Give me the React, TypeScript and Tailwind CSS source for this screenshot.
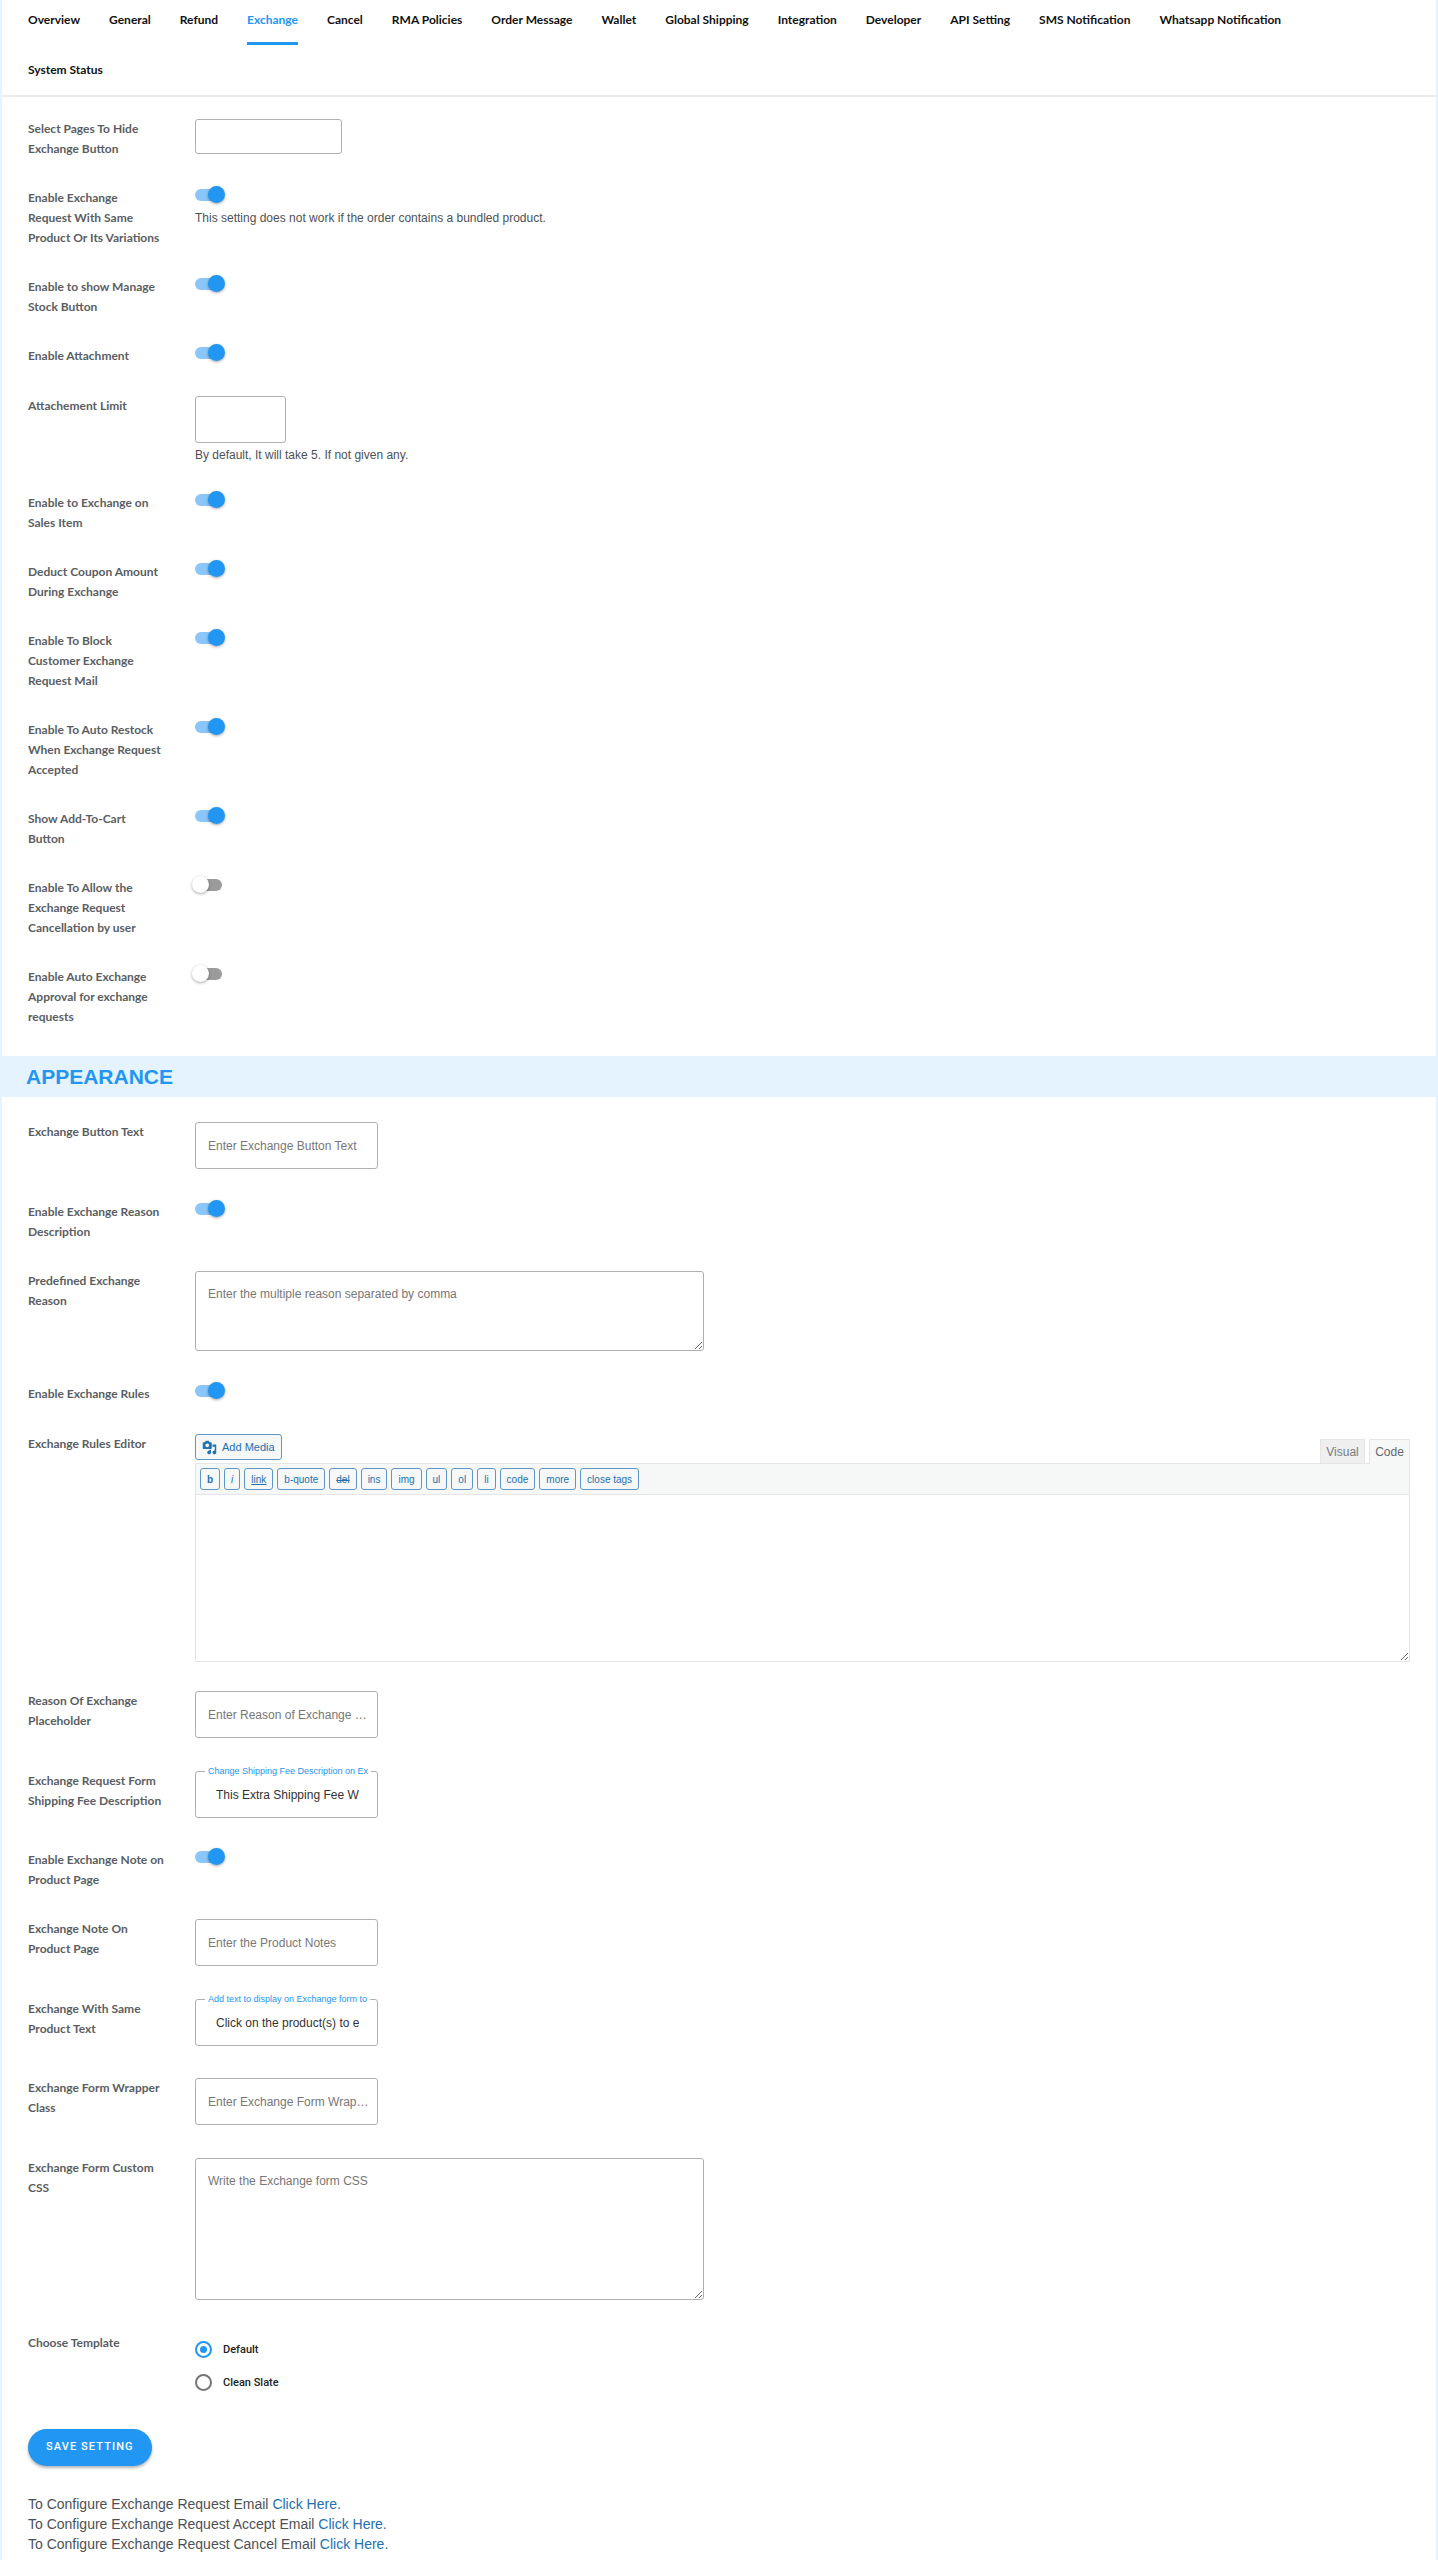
import type { ReactNode } from "react";

const tabs = [
  "Overview", "General", "Refund", "Exchange", "Cancel", "RMA Policies", "Order Message", "Wallet",
  "Global Shipping", "Integration", "Developer", "API Setting", "SMS Notification", "Whatsapp Notification",
  "System Status",
];

const quicktags = [
  { label: "b", style: "font-bold" },
  { label: "i", style: "italic" },
  { label: "link", style: "underline" },
  { label: "b-quote", style: "" },
  { label: "del", style: "line-through" },
  { label: "ins", style: "" },
  { label: "img", style: "" },
  { label: "ul", style: "" },
  { label: "ol", style: "" },
  { label: "li", style: "" },
  { label: "code", style: "" },
  { label: "more", style: "" },
  { label: "close tags", style: "" },
];

const mailLinks = ["Exchange Request Email", "Exchange Request Accept Email", "Exchange Request Cancel Email"];

function Row({ id, label, children }: { id?: string; label: string; children: ReactNode }) {
  return (
    <div className="flex min-h-[50px] px-[26px] pt-[15px] pb-[14px]">
      <label htmlFor={id} className="w-[167px] shrink-0 whitespace-pre-line font-[Lato,sans-serif] text-xs leading-5 font-bold text-[#5a5e63]">
        {label}
      </label>
      <div className="min-w-0 flex-1">{children}</div>
    </div>
  );
}

function Toggle({ id, label, on = true, hint }: { id: string; label: string; on?: boolean; hint?: string }) {
  return (
    <Row id={id} label={label}>
      <span className="relative mt-px block h-3 w-[27px]">
        <input id={id} type="checkbox" role="switch" defaultChecked={on} className="peer block h-3 w-[27px] cursor-pointer appearance-none rounded-full bg-[#9b9b9b] checked:bg-[#8ac6f9]" />
        <span className="pointer-events-none absolute -top-[3px] -left-[3px] size-[17px] rounded-full bg-white shadow-[0_1px_3px_rgba(0,0,0,0.35)] peer-checked:left-[13px] peer-checked:bg-[#2196f3]" />
      </span>
      {hint && <p className="mt-2 text-xs leading-[18px] text-[#4d5156]">{hint}</p>}
    </Row>
  );
}

function TextRow({ id, label, placeholder }: { id: string; label: string; placeholder: string }) {
  return (
    <Row id={id} label={label}>
      <input id={id} type="text" placeholder={placeholder} className="mb-1 block h-[47px] w-[183px] rounded-[3px] border border-[#b0b0b0] pr-2 pl-3 text-xs text-ellipsis text-[#333] outline-none placeholder:text-[#777]" />
    </Row>
  );
}

// outlined field whose caption sits in a notch of the top border
function FloatingRow({ id, label, caption, value }: { id: string; label: string; caption: string; value: string }) {
  return (
    <Row id={id} label={label}>
      <div className="relative mb-[3px] h-[47px] w-[183px] rounded-[3px] border border-[#b0b0b0] pr-[18px] pl-5">
        <label htmlFor={id} className="absolute -top-2 left-[9px] bg-white px-[3px] text-[9px] leading-[14px] whitespace-nowrap text-[#2196f3]">
          {caption}
        </label>
        <input id={id} type="text" defaultValue={value} className="block h-full w-full text-xs text-[#333] outline-none" />
      </div>
    </Row>
  );
}

function AreaRow({ id, label, placeholder, tall }: { id: string; label: string; placeholder: string; tall?: boolean }) {
  return (
    <Row id={id} label={label}>
      <textarea id={id} placeholder={placeholder} className={`mb-1 block w-full max-w-[509px] resize rounded-[3px] border border-[#b0b0b0] px-3 py-[13px] text-xs leading-[18px] outline-none placeholder:text-[#777] ${tall ? "h-[142px]" : "h-20"}`} />
    </Row>
  );
}

function Radio({ label, checked }: { label: string; checked?: boolean }) {
  return (
    <label className="flex items-center gap-[11px] font-[Roboto,sans-serif] text-[11px] leading-[17px] font-medium text-[#222]">
      <input type="radio" name="template" defaultChecked={checked} className="size-[17px] appearance-none rounded-full border-2 border-[#757575] bg-clip-content p-[3px] checked:border-[#2196f3] checked:bg-[#2196f3]" />
      {label}
    </label>
  );
}

function MediaIcon() {
  return (
    <svg viewBox="0 0 20 20" className="size-[15px] fill-[#2271b1]">
      <path d="M13 11V4c0-.55-.45-1-1-1h-1.670L9 1H5L3.670 3H2c-.55 0-1 .45-1 1v7c0 .55.45 1 1 1h10c.55 0 1-.45 1-1zM7 4.500c1.380 0 2.500 1.120 2.500 2.500S8.380 9.500 7 9.500 4.500 8.380 4.500 7 5.620 4.500 7 4.500zM14 6h5v10.500c0 1.380-1.120 2.500-2.500 2.500S14 17.880 14 16.500s1.120-2.500 2.500-2.500c.17 0 .34.020.5.050V9h-3V6zM10 14.050V13h2v3.500c0 1.380-1.120 2.500-2.500 2.500S7 17.880 7 16.500 8.120 14 9.500 14c.17 0 .34.020.5.050z" />
    </svg>
  );
}

function RulesEditor() {
  return (
    <div>
      <div className="flex h-[29px] items-start justify-between">
        <button type="button" className="flex h-[26px] items-center gap-[5px] rounded-[3px] border border-[#5d97c8] bg-[#f6f7f7] px-[6px] text-[11px] text-[#2271b1]">
          <MediaIcon />
          Add Media
        </button>
        <div className="flex gap-1 self-end text-xs">
          <button type="button" className="h-6 w-[45px] border border-b-0 border-[#e5e5e5] bg-[#efefef] text-[#787c82]">Visual</button>
          <button type="button" className="relative -mb-px h-[25px] w-[41px] border border-b-0 border-[#e5e5e5] bg-[#f6f7f7] text-[#646970]">Code</button>
        </div>
      </div>
      <div className="border border-[#e5e5e5]">
        <div className="flex flex-wrap gap-1 border-b border-[#e5e5e5] bg-[#f6f7f7] px-1 py-1">
          {quicktags.map(t => (
            <button key={t.label} type="button" className={`h-[22px] rounded-[3px] border border-[#5d97c8] bg-[#f6f7f7] px-[6px] text-[10px] text-[#2271b1] ${t.style}`}>
              {t.label}
            </button>
          ))}
        </div>
        <textarea id="rules" className="block h-[166px] w-full resize-y p-2 text-xs outline-none" />
      </div>
    </div>
  );
}

export default function App() {
  return (
    <main className="min-h-screen border-x-2 border-[#e5f3ff] bg-white pb-[5px] font-['Liberation_Sans',Arial,sans-serif] text-[#4d5156]">
      <nav className="flex flex-wrap gap-y-[5px] border-b-2 border-[#ebebeb] pr-16 pl-3 font-[Lato,sans-serif] text-xs leading-5 font-bold text-[#111]">
        {tabs.map(t => (
          <a key={t} href="#" className="pr-[15px] pl-[14px]">
            <span className={`block h-[45px] pt-[10px] ${t === "Exchange" ? "border-b-3 border-[#2196f3] text-[#2196f3]" : ""}`}>{t}</span>
          </a>
        ))}
      </nav>

      <form className="pt-[7px]" onSubmit={e => e.preventDefault()}>
        <Row id="pages" label={"Select Pages To Hide\nExchange Button"}>
          <input id="pages" type="text" className="block h-[35px] w-[147px] rounded-[3px] border border-[#b0b0b0] px-2 text-xs outline-none" />
        </Row>
        <Toggle id="same" label={"Enable Exchange\nRequest With Same\nProduct Or Its Variations"} hint="This setting does not work if the order contains a bundled product." />
        <Toggle id="stock" label={"Enable to show Manage\nStock Button"} />
        <Toggle id="attach" label="Enable Attachment" />
        <Row id="limit" label="Attachement Limit">
          <input id="limit" type="text" className="block h-[47px] w-[91px] rounded-[3px] border border-[#b0b0b0] px-3 text-xs outline-none" />
          <p className="mt-[3px] text-xs leading-[18px]">By default, It will take 5. If not given any.</p>
        </Row>
        <Toggle id="sales" label={"Enable to Exchange on\nSales Item"} />
        <Toggle id="coupon" label={"Deduct Coupon Amount\nDuring Exchange"} />
        <Toggle id="block" label={"Enable To Block\nCustomer Exchange\nRequest Mail"} />
        <Toggle id="restock" label={"Enable To Auto Restock\nWhen Exchange Request\nAccepted"} />
        <Toggle id="cart" label={"Show Add-To-Cart\nButton"} />
        <Toggle id="cancel" label={"Enable To Allow the\nExchange Request\nCancellation by user"} on={false} />
        <Toggle id="auto" label={"Enable Auto Exchange\nApproval for exchange\nrequests"} on={false} />

        <h2 className="mt-[15px] mb-[10px] bg-[#e5f3ff] px-6 text-[21px] leading-[41px] font-bold text-[#2196f3]">APPEARANCE</h2>

        <TextRow id="btn-text" label="Exchange Button Text" placeholder="Enter Exchange Button Text" />
        <Toggle id="reason-desc" label={"Enable Exchange Reason\nDescription"} />
        <AreaRow id="reasons" label={"Predefined Exchange\nReason"} placeholder="Enter the multiple reason separated by comma" />
        <Toggle id="rules-on" label="Enable Exchange Rules" />
        <Row id="rules" label="Exchange Rules Editor">
          <RulesEditor />
        </Row>
        <TextRow id="reason-ph" label={"Reason Of Exchange\nPlaceholder"} placeholder="Enter Reason of Exchange Placeholder" />
        <FloatingRow id="fee" label={"Exchange Request Form\nShipping Fee Description"} caption="Change Shipping Fee Description on Ex" value="This Extra Shipping Fee Will be Deducted" />
        <Toggle id="note-on" label={"Enable Exchange Note on\nProduct Page"} />
        <TextRow id="note" label={"Exchange Note On\nProduct Page"} placeholder="Enter the Product Notes" />
        <FloatingRow id="same-text" label={"Exchange With Same\nProduct Text"} caption="Add text to display on Exchange form to" value="Click on the product(s) to exchange" />
        <TextRow id="wrapper" label={"Exchange Form Wrapper\nClass"} placeholder="Enter Exchange Form Wrapper Class" />
        <AreaRow id="css" label={"Exchange Form Custom\nCSS"} placeholder="Write the Exchange form CSS" tall />
        <Row label="Choose Template">
          <div className="flex flex-col gap-4 pt-2">
            <Radio label="Default" checked />
            <Radio label="Clean Slate" />
          </div>
        </Row>

        <button type="submit" className="mx-[26px] mt-6 block h-[37px] rounded-full bg-[#2196f3] px-[18px] font-[Roboto,sans-serif] text-[11px] font-medium tracking-widest text-white shadow-[0_2px_3px_rgba(0,0,0,0.3)]">
          SAVE SETTING
        </button>
      </form>

      <div className="px-[26px] pt-[28px] text-sm leading-5">
        {mailLinks.map(m => (
          <p key={m}>To Configure {m} <a href="#" className="text-[#2271b1]">Click Here.</a></p>
        ))}
      </div>
    </main>
  );
}
